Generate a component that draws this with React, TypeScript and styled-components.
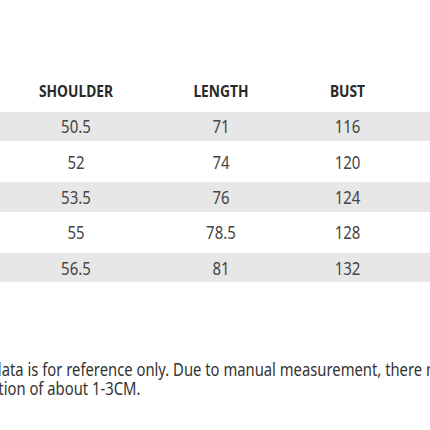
import React from "react";
import styled, { createGlobalStyle } from "styled-components";

const GlobalStyle = createGlobalStyle`
  html, body { margin: 0; padding: 0; background: #ffffff; }
  body { overflow: hidden; }
`;

const Page = styled.div`
  width: 430px;
  height: 430px;
  overflow: hidden;
  box-sizing: border-box;
  padding-top: 72px;
  font-family: "Noto Sans", "Open Sans", sans-serif;
  background: #ffffff;
`;

const Table = styled.div`
  display: flex;
  flex-direction: column;
`;

const Grid = styled.div<{ $shaded?: boolean; $h: number }>`
  display: grid;
  grid-template-columns: 152px 138px 115px 1fr;
  align-items: center;
  height: ${(p) => p.$h}px;
  box-sizing: border-box;
  padding: 3px 0;
  background: ${(p) => (p.$shaded ? "#e7e7e7" : "transparent")};
  background-clip: content-box;
`;

const HeadCell = styled.div`
  text-align: center;
  font-size: 13.8px;
  font-weight: 700;
  color: #2a2a2a;
  transform: scaleY(1.2);
`;

const Cell = styled.div`
  text-align: center;
  font-size: 15px;
  color: #444444;
  transform: scaleY(1.2);
`;

const Note = styled.div`
  margin-top: 75px;
  margin-left: -38.5px;
  white-space: nowrap;
  font-size: 14.8px;
  color: #333333;
  display: flex;
  flex-direction: column;
`;

const NoteLine = styled.div`
  height: 19px;
  line-height: 19px;
  transform: scaleY(1.2);
  transform-origin: left center;
`;

const rows = [
  ["50.5", "71", "116"],
  ["52", "74", "120"],
  ["53.5", "76", "124"],
  ["55", "78.5", "128"],
  ["56.5", "81", "132"],
];

export default function App() {
  return (
    <>
      <GlobalStyle />
      <Page>
        <Table>
          <Grid $h={36.7}>
            <HeadCell>SHOULDER</HeadCell>
            <HeadCell>LENGTH</HeadCell>
            <HeadCell>BUST</HeadCell>
            <div />
          </Grid>
          {rows.map((r, i) => (
            <Grid key={i} $h={35.3} $shaded={i % 2 === 0}>
              {r.map((v, j) => (
                <Cell key={j}>{v}</Cell>
              ))}
              <div />
            </Grid>
          ))}
        </Table>
        <Note>
          <NoteLine>Size data is for reference only. Due to manual measurement, there may be a</NoteLine>
          <NoteLine>deviation of about 1-3CM.</NoteLine>
        </Note>
      </Page>
    </>
  );
}
